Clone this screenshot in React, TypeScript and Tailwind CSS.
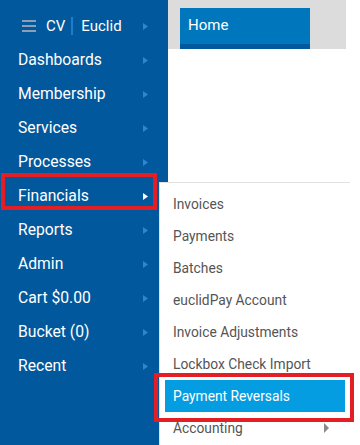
import React from "react";

const sideItems = [
  "Dashboards",
  "Membership",
  "Services",
  "Processes",
  "Financials",
  "Reports",
  "Admin",
  "Cart $0.00",
  "Bucket (0)",
  "Recent",
];

const subItems = [
  "Invoices",
  "Payments",
  "Batches",
  "euclidPay Account",
  "Invoice Adjustments",
  "Lockbox Check Import",
  "Payment Reversals",
  "Accounting",
];

function Caret({ active }: { active?: boolean }) {
  return (
    <svg width="5" height="7" viewBox="0 0 5 7" className="shrink-0">
      <polygon points="0,0 5,3.5 0,7" fill={active ? "#ffffff" : "#2f86d0"} />
    </svg>
  );
}

export default function App() {
  return (
    <div
      className="relative w-[360px] h-[445px] bg-white overflow-hidden flex"
      style={{ fontFamily: "Roboto, 'Liberation Sans', sans-serif" }}
    >
      {/* Sidebar */}
      <div className="w-[168px] h-[445px] bg-[#02589c] pt-[9px] flex flex-col">
        <div className="h-[34px] flex items-center pl-[22px] pr-[20px]">
          <div className="flex flex-col gap-[3px] w-[14px]">
            <div className="h-[2px] bg-[#8c9fb5]" />
            <div className="h-[2px] bg-[#8c9fb5]" />
            <div className="h-[2px] bg-[#8c9fb5]" />
          </div>
          <span className="ml-[10px] text-white text-[15px]">CV</span>
          <span className="ml-[6px] w-[2px] h-[18px] bg-[#1b7fd0]" />
          <span className="ml-[8px] text-white text-[15px]">Euclid</span>
          <span className="flex-1" />
          <Caret />
        </div>
        {sideItems.map((t) => (
          <div
            key={t}
            className="h-[34px] flex items-center pl-[18px] pr-[20px] text-white text-[15.7px]"
          >
            <span className="flex-1">{t}</span>
            <Caret active={t === "Financials"} />
          </div>
        ))}
      </div>

      {/* Main */}
      <div className="flex-1">
        <div className="w-[178px] h-[49px] bg-[#dcdcdc] pl-[12px] pt-[8px]">
          <div className="w-[130px] h-[41px] bg-[#0077bd] border-b-[5px] border-[#02589c] pl-[8px] pt-[7px] text-white text-[15px] leading-[20px]">
            Home
          </div>
        </div>
      </div>

      {/* Dropdown submenu */}
      <div className="absolute left-[159px] top-[182px] w-[191px] h-[270px] bg-white border-l border-t border-[#e2e2e2] pt-[5px] px-[5px]">
        {subItems.map((t) => (
          <div
            key={t}
            className={
              "h-[32px] flex items-center pl-[8px] pr-[16px] text-[13.8px] " +
              (t === "Payment Reversals"
                ? "bg-[#049de2] text-white"
                : "text-[#555555]")
            }
          >
            <span className="flex-1">{t}</span>
            {t === "Accounting" && (
              <svg width="5" height="10" viewBox="0 0 5 10">
                <polygon points="0,0 5,5 0,10" fill="#8a8a8a" />
              </svg>
            )}
          </div>
        ))}
      </div>

      {/* Annotation boxes */}
      <div className="absolute left-[1px] top-[173px] w-[156px] h-[37px] border-[4px] border-[#e31e24]" />
      <div className="absolute left-[154px] top-[373px] w-[200px] h-[49px] border-[4px] border-[#e31e24]" />
    </div>
  );
}
